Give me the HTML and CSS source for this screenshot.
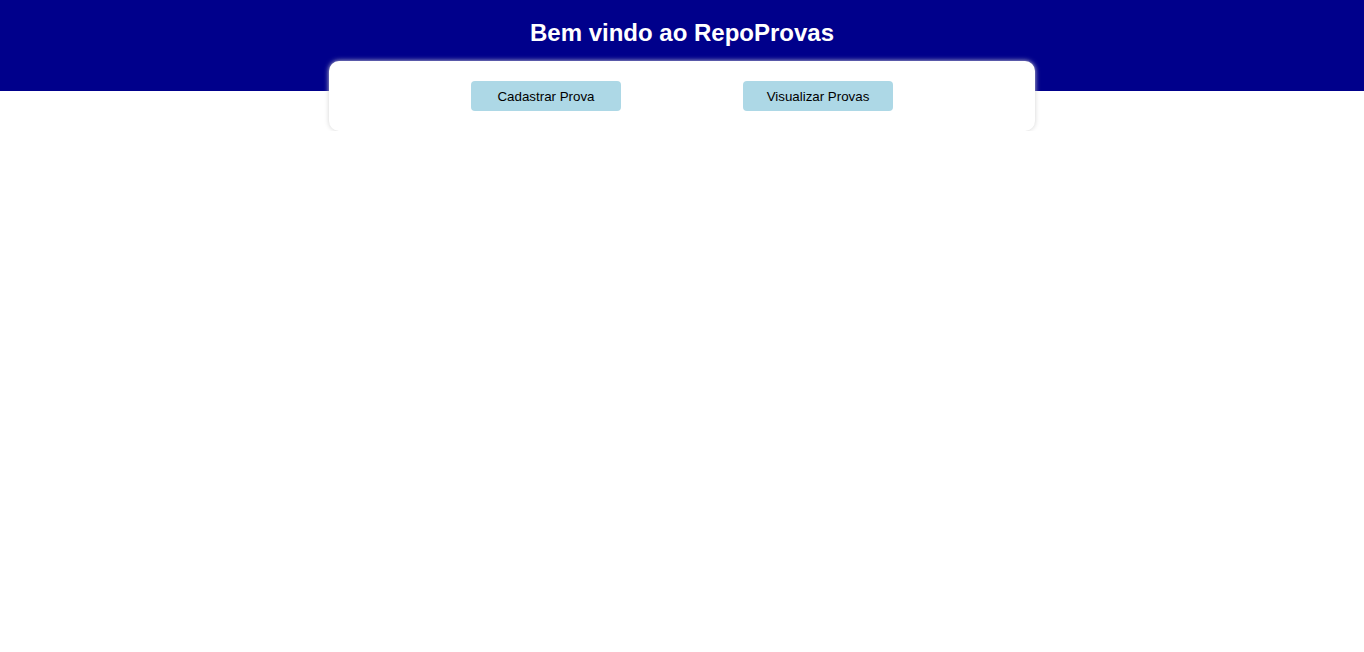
FILE: index.html
```html
<!DOCTYPE html>
<html lang="pt-BR">
<head>
<meta charset="utf-8">
<title>RepoProvas</title>
<link rel="stylesheet" href="styles.css">
</head>
<body>
<header class="top">
  <h1 class="title">Bem vindo ao RepoProvas</h1>
</header>
<main class="card">
  <button class="btn">Cadastrar Prova</button>
  <button class="btn">Visualizar Provas</button>
</main>
</body>
</html>
```

FILE: styles.css
```css
* { box-sizing: border-box; }
html, body { margin: 0; padding: 0; background: #fff; }
body { font-family: "Liberation Sans", Arial, sans-serif; }
.top {
  height: 91px;
  background: #00008b;
  padding-top: 19px;
}
.title {
  margin: 0;
  color: #fff;
  font-size: 24px;
  line-height: 28px;
  font-weight: bold;
  text-align: center;
}
.card {
  width: 706px;
  height: 70px;
  margin: -30px auto 0;
  background: #fff;
  border-radius: 10px;
  box-shadow: 0 0 5px 0 #d3d3d3;
  display: flex;
  justify-content: center;
  align-items: center;
  gap: 122px;
  position: relative;
}
.btn {
  width: 150px;
  height: 30px;
  border: none;
  border-radius: 4px;
  background: #add8e6;
  color: #000;
  font-family: "Liberation Sans", Arial, sans-serif;
  font-size: 13.333px;
  padding: 0;
}
```
